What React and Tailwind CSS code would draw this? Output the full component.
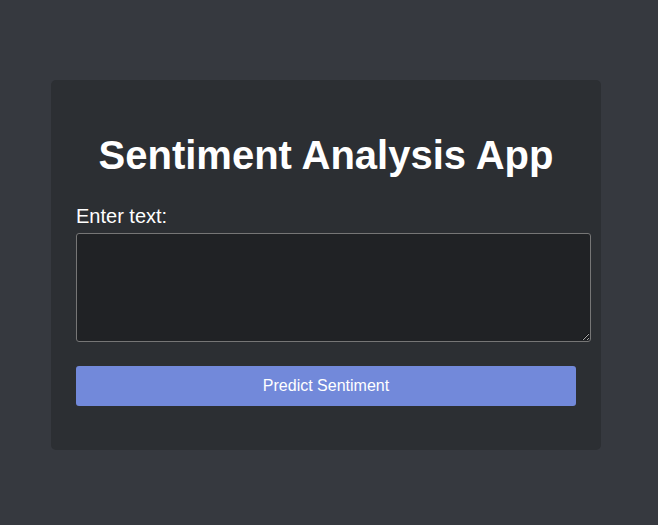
import React, { useState } from 'react';

const App = () => {
  const [text, setText] = useState('');

  return (
    <div className="min-h-screen bg-[#36393f] pt-[80px] pl-[51px] font-['Liberation_Sans',Arial,sans-serif] text-white">
      <div className="w-[550px] h-[370px] rounded-[5px] bg-[#2c2f33] px-[25px] pt-[52px]">
        <h1 className="text-center text-[40px] font-bold leading-[46px]">
          Sentiment Analysis App
        </h1>
        <label htmlFor="text" className="mt-[27px] block text-[20px] leading-[23px]">
          Enter text:
        </label>
        <textarea
          id="text"
          value={text}
          onChange={(e) => setText(e.target.value)}
          className="mt-[5px] block h-[109px] w-[515px] rounded-[3px] border border-[#767676] bg-[#202225] p-2 text-white outline-none"
        />
        <button
          type="button"
          className="mt-[24px] block h-[40px] w-[500px] rounded-[3px] bg-[#7289da] text-[16px] text-white"
        >
          Predict Sentiment
        </button>
      </div>
    </div>
  );
};

export default App;
